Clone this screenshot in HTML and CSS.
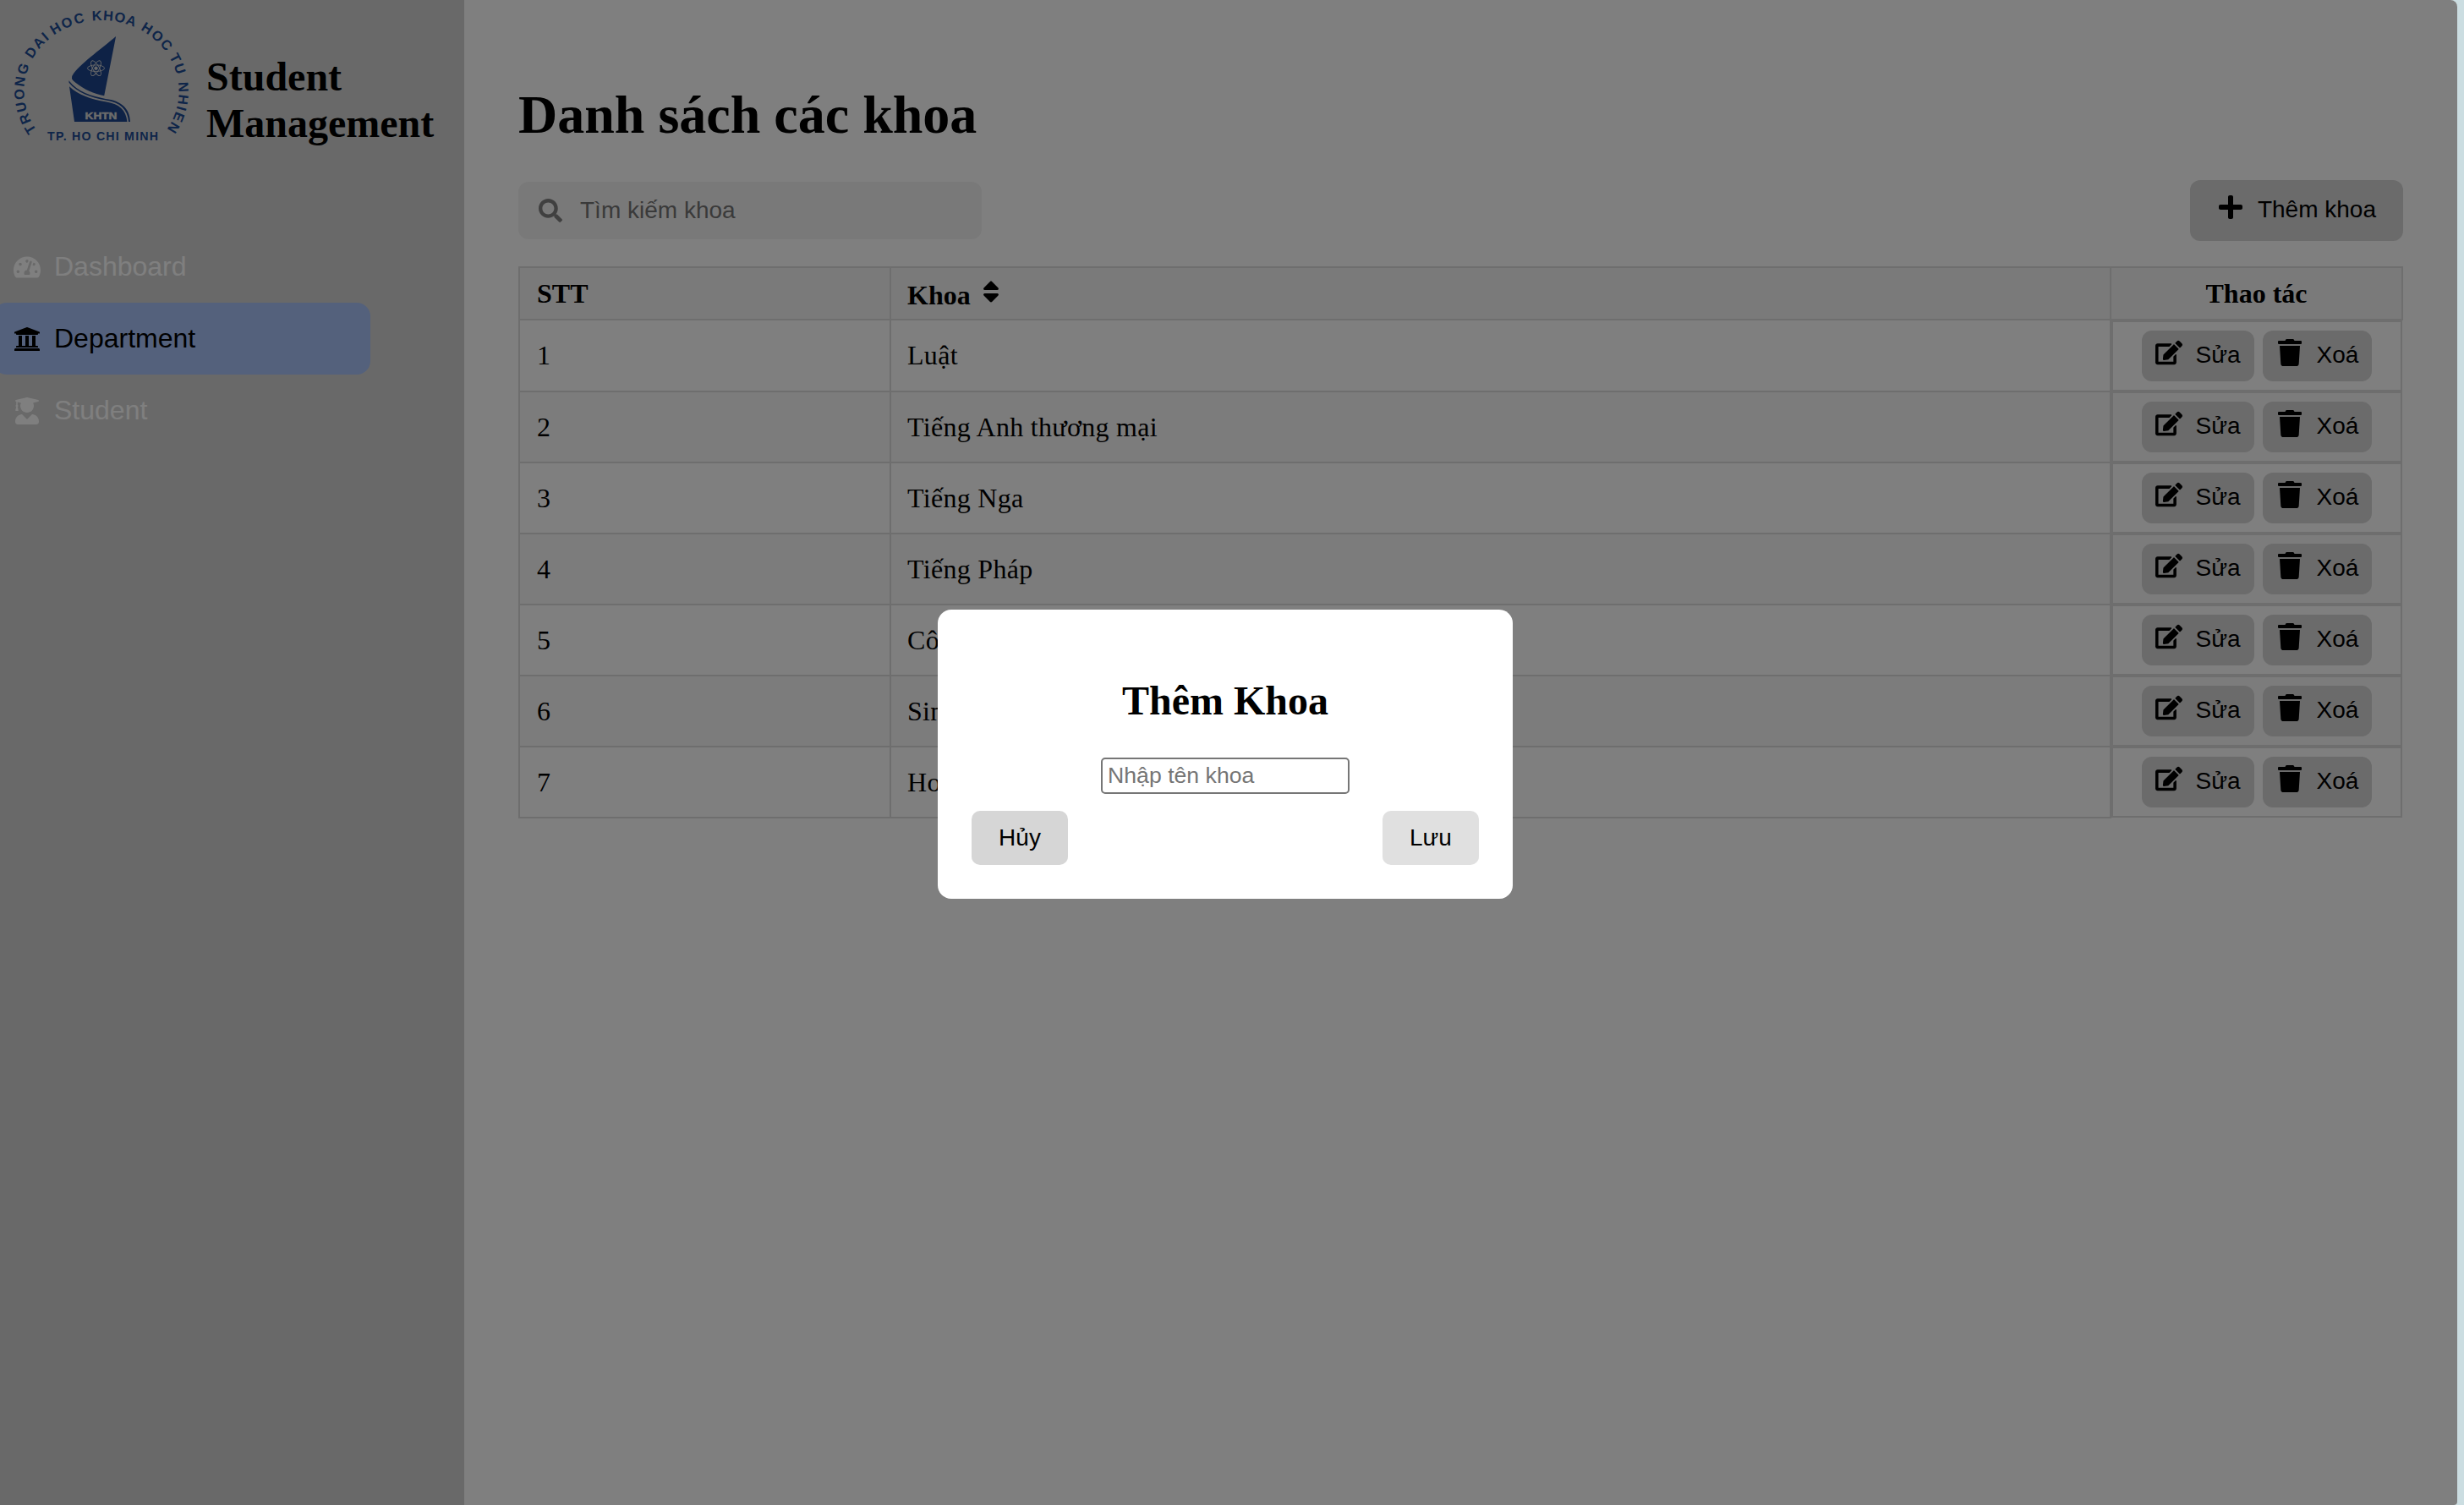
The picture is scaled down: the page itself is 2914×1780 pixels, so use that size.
FILE: index.html
```html
<!DOCTYPE html>
<html lang="vi">
<head>
<meta charset="utf-8">
<title>Student Management</title>
<link rel="stylesheet" href="styles.css">
</head>
<body>
<svg class="sprite" width="0" height="0" aria-hidden="true">
  <symbol id="i-gauge" viewBox="0 0 576 512"><path d="M288 32C128.940 32 0 160.940 0 320c0 52.800 14.250 102.260 39.060 144.800 5.610 9.620 16.300 15.200 27.440 15.200h443c11.140 0 21.830-5.580 27.440-15.200C561.750 422.260 576 372.800 576 320c0-159.060-128.940-288-288-288zm0 64c14.710 0 26.580 10.130 30.320 23.650-1.110 2.260-2.640 4.230-3.450 6.670l-9.220 27.670c-5.130 3.490-10.970 6.010-17.640 6.010-17.670 0-32-14.330-32-32S270.330 96 288 96zM96 384c-17.670 0-32-14.330-32-32s14.330-32 32-32 32 14.330 32 32-14.330 32-32 32zm48-160c-17.670 0-32-14.330-32-32s14.330-32 32-32 32 14.330 32 32-14.330 32-32 32zm246.770-72.410l-61.330 184C343.130 347.330 352 364.540 352 384c0 11.720-3.380 22.550-8.880 32H232.880c-5.500-9.450-8.880-20.280-8.880-32 0-33.940 26.500-61.430 59.900-63.590l61.340-184.010c4.170-12.560 17.730-19.450 30.360-15.170 12.570 4.190 19.350 17.790 15.170 30.360zm14.660 57.200l15.520-46.550c3.470-1.290 7.130-2.230 11.050-2.230 17.670 0 32 14.330 32 32s-14.330 32-32 32c-11.380-.01-20.890-6.280-26.570-15.220zM480 384c-17.670 0-32-14.330-32-32s14.330-32 32-32 32 14.330 32 32-14.330 32-32 32z"/></symbol>
  <symbol id="i-university" viewBox="0 0 512 512"><path d="M496 128v16a8 8 0 0 1-8 8h-24v12c0 6.627-5.373 12-12 12H60c-6.627 0-12-5.373-12-12v-12H24a8 8 0 0 1-8-8v-16a8 8 0 0 1 4.941-7.392l232-88a7.996 7.996 0 0 1 6.118 0l232 88A8 8 0 0 1 496 128zm-24 304H40c-13.255 0-24 10.745-24 24v16a8 8 0 0 0 8 8h464a8 8 0 0 0 8-8v-16c0-13.255-10.745-24-24-24zM96 192v192H60c-6.627 0-12 5.373-12 12v20h416v-20c0-6.627-5.373-12-12-12h-36V192h-64v192h-64V192h-64v192h-64V192H96z"/></symbol>
  <symbol id="i-graduate" viewBox="0 0 448 512"><path d="M319.4 320.6L224 416l-95.4-95.4C57.1 323.7 0 382.2 0 454.4v9.6c0 26.5 21.5 48 48 48h352c26.500 0 48-21.500 48-48v-9.600c0-72.200-57.100-130.700-128.600-133.800zM13.600 79.800l6.400 1.500v58.400c-7 4.200-12 11.500-12 20.300 0 8.400 4.600 15.400 11.100 19.700L3.500 242c-1.700 6.900 2.100 14 7.600 14h41.800c5.500 0 9.300-7.100 7.600-14l-15.600-62.300C51.400 175.400 56 168.400 56 160c0-8.800-5-16.100-12-20.300V87.100l66 15.900c-8.600 17.200-14 36.400-14 57 0 70.700 57.300 128 128 128s128-57.300 128-128c0-20.600-5.300-39.800-14-57l96.300-23.200c18.200-4.400 18.200-27.100 0-31.500l-190.400-46c-13-3.100-26.700-3.100-39.700 0L13.600 48.200c-18.100 4.400-18.100 27.200 0 31.600z"/></symbol>
  <symbol id="i-search" viewBox="0 0 512 512"><path d="M505 442.700L405.300 343c-4.500-4.500-10.600-7-17-7H372c27.600-35.300 44-79.700 44-128C416 93.100 322.900 0 208 0S0 93.100 0 208s93.100 208 208 208c48.300 0 92.700-16.400 128-44v16.300c0 6.400 2.500 12.500 7 17l99.700 99.700c9.400 9.400 24.600 9.400 33.900 0l28.300-28.300c9.400-9.400 9.400-24.600.1-34zM208 336c-70.700 0-128-57.200-128-128 0-70.700 57.200-128 128-128 70.700 0 128 57.200 128 128 0 70.700-57.200 128-128 128z"/></symbol>
  <symbol id="i-sort" viewBox="0 0 320 512"><path d="M41 288h238c21.400 0 32.100 25.900 17 41L177 448c-9.400 9.400-24.600 9.400-33.900 0L24 329c-15.100-15.100-4.400-41 17-41zm255-105L177 64c-9.400-9.400-24.600-9.400-33.900 0L24 183c-15.100 15.100-4.400 41 17 41h238c21.400 0 32.100-25.900 17-41z"/></symbol>
  <symbol id="i-plus" viewBox="0 0 448 512"><path d="M416 208H272V64c0-17.670-14.330-32-32-32h-32c-17.670 0-32 14.330-32 32v144H32c-17.670 0-32 14.330-32 32v32c0 17.670 14.330 32 32 32h144v144c0 17.670 14.330 32 32 32h32c17.670 0 32-14.330 32-32V304h144c17.670 0 32-14.330 32-32v-32c0-17.670-14.330-32-32-32z"/></symbol>
  <symbol id="i-edit" viewBox="0 0 576 512"><path d="M402.600 83.200l90.200 90.200c3.800 3.800 3.800 10 0 13.800L274.400 405.600l-92.800 10.300c-12.400 1.400-22.900-9.100-21.500-21.500l10.300-92.800L388.800 83.200c3.800-3.800 10-3.800 13.800 0zm162-22.900l-48.800-48.800c-15.200-15.200-39.900-15.200-55.200 0l-35.400 35.400c-3.800 3.800-3.800 10 0 13.800l90.200 90.200c3.800 3.800 10 3.800 13.800 0l35.400-35.400c15.200-15.300 15.200-40 0-55.200zM384 346.200V448H64V128h229.800c3.200 0 6.200-1.300 8.500-3.500l40-40c7.600-7.600 2.200-20.500-8.500-20.500H48C21.500 64 0 85.500 0 112v352c0 26.500 21.500 48 48 48h352c26.500 0 48-21.500 48-48V306.200c0-10.700-12.900-16-20.500-8.500l-40 40c-2.200 2.300-3.500 5.300-3.500 8.500z"/></symbol>
  <symbol id="i-trash" viewBox="0 0 448 512"><path d="M432 32H312l-9.400-18.700A24 24 0 0 0 281.100 0H166.800a23.720 23.720 0 0 0-21.400 13.300L136 32H16A16 16 0 0 0 0 48v32a16 16 0 0 0 16 16h416a16 16 0 0 0 16-16V48a16 16 0 0 0-16-16zM53.200 467a48 48 0 0 0 47.900 45h245.800a48 48 0 0 0 47.900-45L416 128H32z"/></symbol>
</svg>

<div class="window">
  <aside class="sidebar">
    <div class="brand">
      <svg class="logo" viewBox="0 0 240 200">
        <path id="ring" fill="none" pathLength="260" d="M49.900 162A91.500 84 0 1 1 190.100 162"/>
        <g class="ring-text">
          <text><textPath href="#ring" startOffset="34">TRUONG</textPath></text>
          <text><textPath href="#ring" startOffset="76.300">DAI</textPath></text>
          <text><textPath href="#ring" startOffset="104.400">HOC</textPath></text>
          <text class="tight"><textPath href="#ring" startOffset="139.800">KHOA</textPath></text>
          <text><textPath href="#ring" startOffset="175.300">HOC</textPath></text>
          <text><textPath href="#ring" startOffset="200.700">TU</textPath></text>
          <text><textPath href="#ring" startOffset="233.800">NHIEN</textPath></text>
        </g>
        <path class="navy" d="M137.100 43C122 56 98 73 87 87Q82 93 89 97.500C100 106 111 111 123.200 113.300Z"/>
        <path class="navy" d="M81.400 95.300C92 109 108 113.500 125 117C143 119 153.500 128 154 144H152C151 129.500 142 121 125 118.600C108 115.500 91 109.500 81.600 97.800Z"/>
        <path class="navy" d="M82 102.300C92 112 107 117.500 126 120.500C141 123 149 130 150.400 144H88Z"/>
        <g class="atom">
          <ellipse cx="113.500" cy="80.700" rx="10" ry="3.800"/>
          <ellipse cx="113.500" cy="80.700" rx="10" ry="3.800" transform="rotate(60 113.500 80.700)"/>
          <ellipse cx="113.500" cy="80.700" rx="10" ry="3.800" transform="rotate(120 113.500 80.700)"/>
          <circle class="nucleus" cx="113.500" cy="80.700" r="1.800"/>
        </g>
        <text class="abbr" x="100.500" y="141" textLength="38" lengthAdjust="spacingAndGlyphs">KHTN</text>
        <text class="city" x="56" y="166" textLength="131">TP. HO CHI MINH</text>
      </svg>
      <h2 class="brand-name">Student Management</h2>
    </div>
    <nav class="menu">
      <a class="item"><svg class="icon"><use href="#i-gauge"/></svg><span>Dashboard</span></a>
      <a class="item active"><svg class="icon"><use href="#i-university"/></svg><span>Department</span></a>
      <a class="item"><svg class="icon"><use href="#i-graduate"/></svg><span>Student</span></a>
    </nav>
  </aside>

  <main class="content">
    <h1 class="title">Danh sách các khoa</h1>
    <div class="toolbar">
      <div class="search"><svg class="icon search-icon"><use href="#i-search"/></svg><input class="search-input" type="text" placeholder="Tìm kiếm khoa"></div>
      <button class="btn add"><svg class="icon"><use href="#i-plus"/></svg><span>Thêm khoa</span></button>
    </div>
    <div class="table">
      <div class="row head">
        <div class="cell stt">STT</div>
        <div class="cell name sortable">Khoa <svg class="icon"><use href="#i-sort"/></svg></div>
        <div class="cell act">Thao tác</div>
      </div>
      <div class="row">
        <div class="cell stt">1</div><div class="cell name">Luật</div>
        <div class="actions"><button class="btn"><svg class="icon"><use href="#i-edit"/></svg><span>Sửa</span></button><button class="btn"><svg class="icon"><use href="#i-trash"/></svg><span>Xoá</span></button></div>
      </div>
      <div class="row">
        <div class="cell stt">2</div><div class="cell name">Tiếng Anh thương mại</div>
        <div class="actions"><button class="btn"><svg class="icon"><use href="#i-edit"/></svg><span>Sửa</span></button><button class="btn"><svg class="icon"><use href="#i-trash"/></svg><span>Xoá</span></button></div>
      </div>
      <div class="row">
        <div class="cell stt">3</div><div class="cell name">Tiếng Nga</div>
        <div class="actions"><button class="btn"><svg class="icon"><use href="#i-edit"/></svg><span>Sửa</span></button><button class="btn"><svg class="icon"><use href="#i-trash"/></svg><span>Xoá</span></button></div>
      </div>
      <div class="row">
        <div class="cell stt">4</div><div class="cell name">Tiếng Pháp</div>
        <div class="actions"><button class="btn"><svg class="icon"><use href="#i-edit"/></svg><span>Sửa</span></button><button class="btn"><svg class="icon"><use href="#i-trash"/></svg><span>Xoá</span></button></div>
      </div>
      <div class="row">
        <div class="cell stt">5</div><div class="cell name">Cô</div>
        <div class="actions"><button class="btn"><svg class="icon"><use href="#i-edit"/></svg><span>Sửa</span></button><button class="btn"><svg class="icon"><use href="#i-trash"/></svg><span>Xoá</span></button></div>
      </div>
      <div class="row">
        <div class="cell stt">6</div><div class="cell name">Sin</div>
        <div class="actions"><button class="btn"><svg class="icon"><use href="#i-edit"/></svg><span>Sửa</span></button><button class="btn"><svg class="icon"><use href="#i-trash"/></svg><span>Xoá</span></button></div>
      </div>
      <div class="row">
        <div class="cell stt">7</div><div class="cell name">Ho</div>
        <div class="actions"><button class="btn"><svg class="icon"><use href="#i-edit"/></svg><span>Sửa</span></button><button class="btn"><svg class="icon"><use href="#i-trash"/></svg><span>Xoá</span></button></div>
      </div>
    </div>
  </main>

  <div class="overlay">
    <div class="modal">
      <h2 class="modal-title">Thêm Khoa</h2>
      <input class="modal-input" type="text" placeholder="Nhập tên khoa">
      <div class="modal-actions">
        <button class="modal-btn cancel">Hủy</button>
        <button class="modal-btn save">Lưu</button>
      </div>
    </div>
  </div>
</div>
</body>
</html>
```
FILE: styles.css
```css
* { box-sizing: border-box; }

html, body { margin: 0; height: 100%; }

body {
  background: #cbdde1;
  font-family: "Liberation Serif", "Times New Roman", serif;
  font-size: 32px;
  color: #000;
  overflow: hidden;
}

.sprite { position: absolute; }

.window {
  position: relative;
  display: flex;
  width: 2906px;
  height: 1780px;
  background: #fff;
  border-radius: 0 8px 4px 0;
  overflow: hidden;
}

.icon { width: 32px; height: 32px; flex: none; fill: currentColor; }

/* Sidebar */
.sidebar {
  width: 549px;
  flex: none;
  background: #d3d3d3;
}

.brand { display: flex; height: 200px; }

.logo { width: 240px; height: 200px; flex: none; }

.logo text { font-family: "Liberation Sans", Arial, sans-serif; font-weight: bold; }

.navy { fill: #1c448c; }

.ring-text {
  fill: #1c4a92;
  font-size: 16.4px;
  letter-spacing: 1.9px;
  text-anchor: middle;
}

.ring-text .tight { letter-spacing: .9px; }

.atom { fill: none; stroke: #d3d3d3; stroke-width: .9; }

.atom .nucleus { fill: #d3d3d3; }

.logo .abbr { fill: #d8d8d8; stroke: #d8d8d8; stroke-width: .5; font-size: 11.5px; }

.city { fill: #1c4a92; font-size: 14.2px; }

.brand-name {
  margin: 63px 0 0 4px;
  width: 280px;
  font-size: 48px;
  line-height: 55.2px;
}

.menu {
  display: flex;
  flex-direction: column;
  width: 446px;
  margin: 73px 0 0 -8px;
  font-family: "Liberation Sans", Arial, sans-serif;
}

.item {
  display: flex;
  align-items: center;
  gap: 16px;
  height: 85px;
  padding-left: 24px;
  border-radius: 16px;
  color: #fff;
}

.item.active { background: #a8c2f8; color: #000; }

/* Main column */
.content { width: 2229px; margin-left: 64px; }

.title {
  margin: 99px 0 0;
  font-size: 64px;
  line-height: 74px;
}

.toolbar {
  display: flex;
  justify-content: space-between;
  align-items: center;
  height: 72px;
  margin: 40px 0 30px;
}

.search {
  display: flex;
  align-items: center;
  width: 548px;
  height: 68px;
  padding-left: 24px;
  background: #f2f2f2;
  border-radius: 12px;
}

.search-icon { width: 28px; height: 28px; color: #808080; }

.search-input {
  width: 440px;
  margin-left: 21px;
  padding: 0;
  border: 0;
  background: none;
  font: 28px "Liberation Sans", Arial, sans-serif;
}

.search-input::placeholder, .modal-input::placeholder { color: #757575; opacity: 1; }

.btn {
  display: flex;
  align-items: flex-start;
  gap: 16px;
  height: 60px;
  padding: 10px 16px;
  border: 0;
  border-radius: 12px;
  background: #d6d6d6;
  color: #000;
  font: 28px/32px "Liberation Sans", Arial, sans-serif;
  white-space: nowrap;
}

.btn span { margin-top: 3px; }

.add { height: 72px; padding: 16px 32px; }

/* Table */
.row { display: flex; align-items: flex-start; height: 84px; }

.row:nth-child(2) { height: 85px; }

.row.head { height: 64px; font-weight: bold; }

.cell {
  display: flex;
  align-items: center;
  height: 100%;
  padding-left: 19px;
  border: 0 solid #ddd;
  border-bottom-width: 2px;
  border-left-width: 2px;
}

.stt { width: 439px; padding-left: 20px; }

.name { width: 1445px; border-right-width: 2px; }

.row:not(.head) .name { letter-spacing: .3px; }

.head .cell { background: #f4f4f4; border-top-width: 2px; }

.head .name { width: 1443px; border-right-width: 0; }

.head .act {
  width: 347px;
  justify-content: center;
  padding-left: 0;
  border-right-width: 2px;
}

.sortable { white-space: pre; padding-top: 4px; }

.sortable .icon { margin-top: -8px; }

.actions {
  display: flex;
  justify-content: center;
  align-items: center;
  gap: 10px;
  width: 344px;
  height: 84px;
  margin-top: -1px;
  border: 2px solid #ddd;
}

.row:nth-child(2) .actions { margin-top: 0; }

.row:nth-child(odd):not(.head) .cell,
.row:nth-child(odd) .actions { background: #f9f9f9; }

/* Dialog */
.overlay {
  position: absolute;
  inset: 0;
  background: rgba(0, 0, 0, .5);
}

.modal {
  display: flex;
  flex-direction: column;
  align-items: center;
  width: 680px;
  height: 342px;
  margin: 721px 0 0 1109px;
  padding: 80px 40px 40px;
  background: #fff;
  border-radius: 16px;
}

.modal-title { margin: 0; font-size: 48px; line-height: 55px; }

.modal-input {
  width: 294px;
  height: 43px;
  margin-top: 40px;
  padding: 2px 6px;
  border: 2px solid #767676;
  border-radius: 5px;
  background: #fff;
  font: 26.67px "Liberation Sans", Arial, sans-serif;
}

.modal-actions {
  display: flex;
  justify-content: space-between;
  width: 600px;
  margin-top: 20px;
}

.modal-btn {
  width: 114px;
  height: 64px;
  padding: 0;
  border: 0;
  border-radius: 10px;
  color: #000;
  font: 28px "Liberation Sans", Arial, sans-serif;
}

.cancel { background: #d6d6d6; }

.save { background: #e0e0e0; }
```
